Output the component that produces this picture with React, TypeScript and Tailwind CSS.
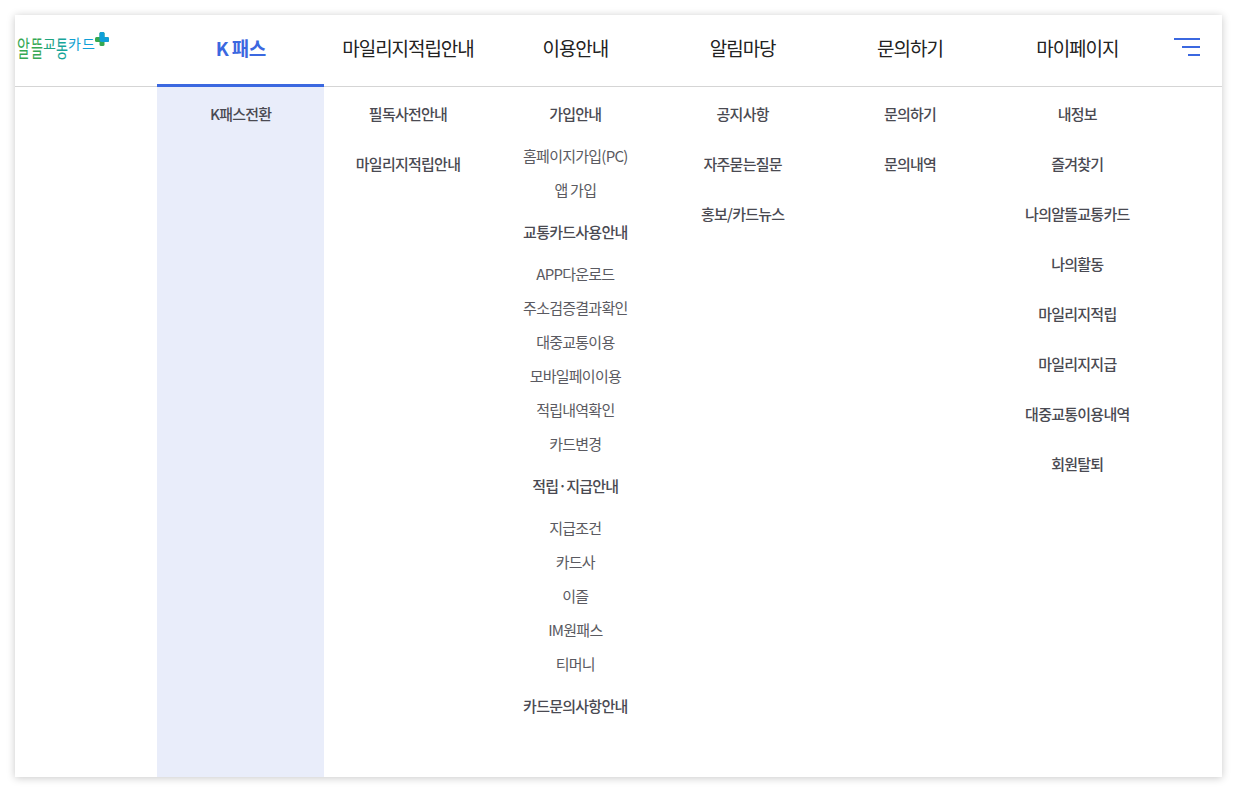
const font = "font-['Noto_Sans_CJK_KR','Noto_Sans',sans-serif]";

const topMenu = ['K 패스', '마일리지적립안내', '이용안내', '알림마당', '문의하기', '마이페이지'];

const guide = [
  { title: '가입안내', items: ['홈페이지가입(PC)', '앱 가입'] },
  { title: '교통카드사용안내', items: ['APP다운로드', '주소검증결과확인', '대중교통이용', '모바일페이이용', '적립내역확인', '카드변경'] },
  { title: '적립·지급안내', items: ['지급조건', '카드사', '이즐', 'IM원패스', '티머니'] },
  { title: '카드문의사항안내', items: [] as string[] },
];

const SimpleColumn = ({ items, active = false }: { items: string[]; active?: boolean }) => (
  <ul className={`w-1/6 pt-[2px] ${active ? 'bg-[#e9edfa]' : ''}`}>
    {items.map((item) => (
      <li key={item} className="flex h-[50px] items-center justify-center text-[15px] font-medium tracking-[-0.75px] text-[#4a4a52]">
        {item}
      </li>
    ))}
  </ul>
);

function Logo() {
  return (
    <div className="flex w-[142px] items-start pl-[2px] pt-[21px]">
      <span className="inline-block w-[14px] origin-top scale-y-[1.65] text-[14px] leading-[14px] text-[#35a853]">알</span>
      <span className="inline-block w-[12px] origin-top scale-y-[1.75] text-[13px] leading-[14px] text-[#35a853]">뜰</span>
      <span className="inline-block w-[13px] origin-top text-[14px] leading-[14px] text-[#20a57f]">교</span>
      <span className="inline-block w-[12px] origin-top scale-y-[1.75] text-[13px] leading-[14px] text-[#18a59a]">통</span>
      <span className="inline-block w-[14px] origin-top text-[14px] leading-[14px] text-[#0f9fd0]">카</span>
      <span className="inline-block w-[14px] origin-top text-[14px] leading-[14px] text-[#0f9fd8]">드</span>
      <svg width="15" height="15" viewBox="0 0 15 15" className="-ml-[1px] -mt-[4px]">
        <rect x="0" y="5" width="14" height="5" rx="1.5" fill="#36a84f" />
        <rect x="4.5" y="0" width="5" height="14" rx="1.5" fill="#36a84f" />
        <path d="M4.5 5V1.5A1.5 1.5 0 0 1 6 0h2a1.5 1.5 0 0 1 1.5 1.5V5h3A1.5 1.5 0 0 1 14 6.500v2A1.5 1.5 0 0 1 12.500 10H7Q4.500 10 4.500 7.500Z" fill="#0f9fd8" />
      </svg>
    </div>
  );
}

export default function App() {
  return (
    <div className={`h-[792px] w-[1237px] overflow-hidden bg-white p-[15px] ${font}`}>
      <div className="flex h-[762px] w-[1207px] flex-col bg-white shadow-[0_1px_8px_rgba(0,0,0,0.22)]">
        <header className="flex h-[72px] shrink-0 border-b border-[#d5d5d5]">
          <Logo />
          <nav className="flex w-[1004px]">
            {topMenu.map((menu, i) => (
              <a
                key={menu}
                className={
                  i === 0
                    ? 'flex h-[72px] w-1/6 items-center justify-center border-b-[3px] border-[#3b68e0] pb-[3px] text-[19px] font-bold tracking-[-0.6px] text-[#3b68e0]'
                    : 'flex h-[72px] w-1/6 items-center justify-center pb-[6px] text-[19px] font-normal tracking-[-1.05px] text-[#222222]'
                }
              >
                {menu}
              </a>
            ))}
          </nav>
          <div className="flex flex-1 flex-col items-end gap-[6px] pr-[22px] pt-[23px]">
            <span className="h-[2px] w-[26px] bg-[#3b68e0]" />
            <span className="h-[2px] w-[18px] bg-[#3b68e0]" />
            <span className="h-[2px] w-[12px] bg-[#3b68e0]" />
          </div>
        </header>
        <div className="flex flex-1">
          <div className="w-[142px] shrink-0" />
          <div className="flex w-[1004px]">
            <SimpleColumn active items={['K패스전환']} />
            <SimpleColumn items={['필독사전안내', '마일리지적립안내']} />
            <div className="w-1/6 pt-[10px]">
              {guide.map((group) => (
                <div key={group.title}>
                  <div className="flex h-[34px] items-center justify-center text-[15px] font-medium tracking-[-0.75px] text-[#4a4a52]">
                    {group.title}
                  </div>
                  {group.items.length > 0 && (
                    <ul className="py-2">
                      {group.items.map((item) => (
                        <li key={item} className="flex h-[34px] items-center justify-center text-[15px] font-normal tracking-[-0.75px] text-[#5a5a61]">
                          {item}
                        </li>
                      ))}
                    </ul>
                  )}
                </div>
              ))}
            </div>
            <SimpleColumn items={['공지사항', '자주묻는질문', '홍보/카드뉴스']} />
            <SimpleColumn items={['문의하기', '문의내역']} />
            <SimpleColumn items={['내정보', '즐겨찾기', '나의알뜰교통카드', '나의활동', '마일리지적립', '마일리지지급', '대중교통이용내역', '회원탈퇴']} />
          </div>
        </div>
      </div>
    </div>
  );
}
